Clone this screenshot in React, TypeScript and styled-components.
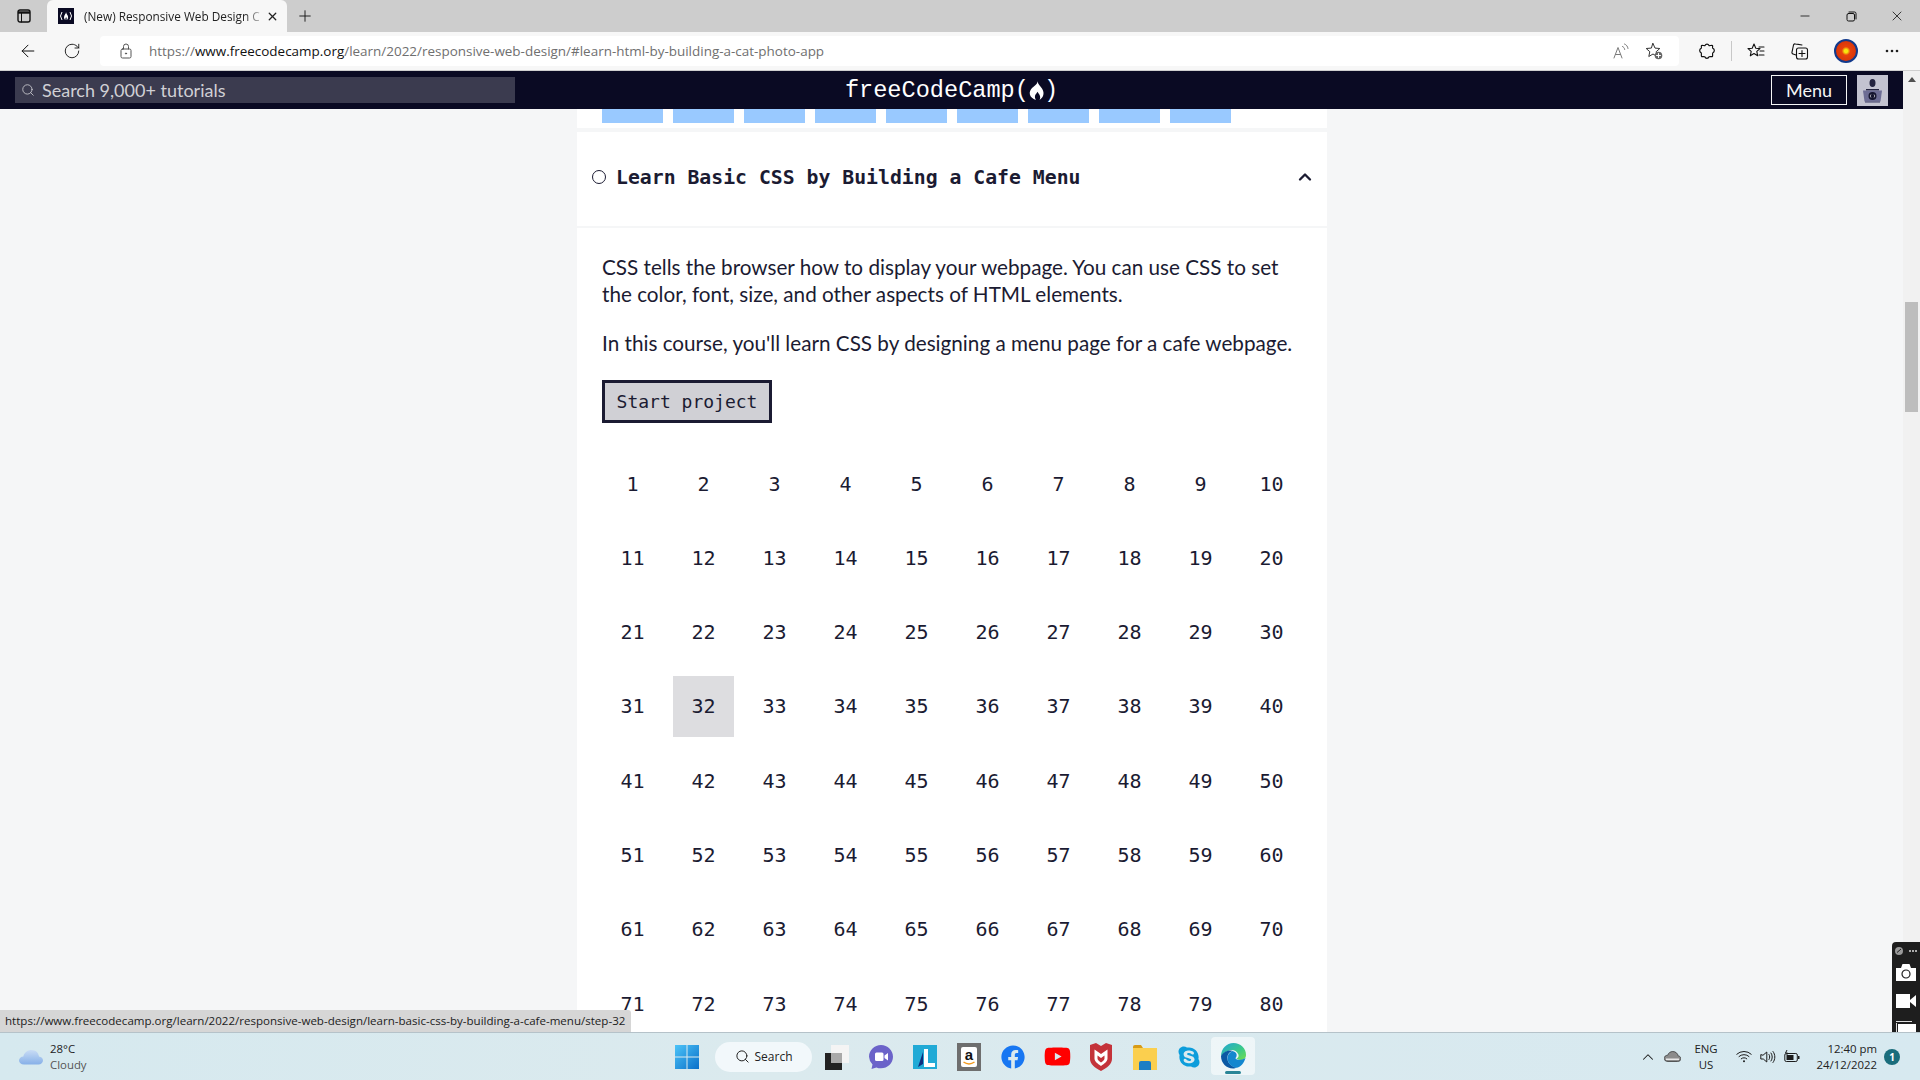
import React from 'react';
import styled, { createGlobalStyle } from 'styled-components';
import { ArrowLeft, RotateCw, Search, X, Plus, Minus, ChevronUp } from 'lucide-react';
import { FaFacebook, FaYoutube, FaSkype } from 'react-icons/fa';

const GlobalStyle = createGlobalStyle`
  html, body { margin: 0; padding: 0; background: #f5f6f7; }
  * { box-sizing: border-box; }
`;

const Shell = styled.div`
  width: 1920px;
  height: 1080px;
  overflow: hidden;
  display: flex;
  flex-direction: column;
  font-family: Lato, "Liberation Sans", sans-serif;
  color: #1b1b32;
`;

/* browser chrome */
const TabStrip = styled.div`
  height: 32px;
  background: #cdcdcd;
  display: flex;
  align-items: stretch;
  padding-left: 8px;
`;

const Slot = styled.div<{ $w?: number }>`
  width: ${p => p.$w ?? 44}px;
  flex: none;
  display: flex;
  align-items: center;
  justify-content: center;
  color: #111;
`;

const Tab = styled.div`
  width: 240px;
  margin-left: 7px;
  background: #f7f7f7;
  border-radius: 6px 6px 0 0;
  display: flex;
  align-items: center;
  padding: 0 8px 0 11px;
`;

const TabTitle = styled.div`
  flex: 1;
  margin-left: 10px;
  font: 11.8px "Open Sans", sans-serif;
  white-space: nowrap;
  color: #222;
  -webkit-mask-image: linear-gradient(90deg, #000 88%, transparent 100%);
  mask-image: linear-gradient(90deg, #000 88%, transparent 100%);
`;

const Spacer = styled.div`
  flex: 1;
`;

const Toolbar = styled.div`
  height: 39px;
  background: #f7f7f7;
  border-bottom: 1px solid #cfcfcf;
  padding: 4px 6px 4px 6px;
  display: flex;
  align-items: stretch;
`;

const AddressBar = styled.div`
  flex: 1;
  margin: 0 6px;
  background: #fff;
  border-radius: 4px;
  display: flex;
  align-items: center;
  padding: 0 9px 0 20px;
`;

const Url = styled.div`
  flex: 1;
  margin-left: 17px;
  font: 13.46px "Open Sans", sans-serif;
  color: #6f6f6f;
  white-space: nowrap;
  strong { font-weight: 400; color: #111; }
`;

const ToolbarDivider = styled.div`
  width: 1px;
  height: 20px;
  margin: 5px 2px 0;
  background: #c8c8c8;
`;

const ProfileDot = styled.div`
  width: 24px;
  height: 24px;
  border-radius: 50%;
  border: 2px solid #123a8c;
  background: radial-gradient(circle, #f6e40f 0 12%, #e8410c 30%, #d8360a 72%, #1d3f86 100%);
`;

const Body = styled.div`
  flex: 1;
  min-height: 0;
  display: flex;
  position: relative;
`;

const Main = styled.div`
  flex: 1;
  min-width: 0;
  display: flex;
  flex-direction: column;
`;

/* freeCodeCamp nav */
const Nav = styled.nav`
  height: 38px;
  flex: none;
  background: #0a0a23;
  display: grid;
  grid-template-columns: 1fr auto 1fr;
  align-items: center;
  padding: 0 15px;
`;

const SearchBox = styled.div`
  width: 500px;
  height: 26px;
  background: #3b3b4f;
  display: flex;
  align-items: center;
  padding-left: 6px;
  gap: 7px;
  color: #d0d0d5;
  font-size: 18px;
`;

const Logo = styled.div`
  display: flex;
  align-items: center;
  color: #fff;
  font: 23.6px "Liberation Mono", monospace;
`;

const NavRight = styled.div`
  display: flex;
  justify-content: flex-end;
  align-items: center;
  gap: 10px;
`;

const MenuButton = styled.div`
  width: 76px;
  height: 30px;
  border: 1px solid #f5f6f7;
  color: #f5f6f7;
  font-size: 18px;
  display: flex;
  align-items: center;
  justify-content: center;
`;

const Page = styled.div`
  flex: 1;
  min-height: 0;
  overflow: hidden;
  background: #f5f6f7;
  position: relative;
`;

const Column = styled.div`
  width: 750px;
  margin: 0 auto 0 577px;
`;

const PrevCard = styled.div`
  height: 19px;
  margin-bottom: 4px;
  background: #fff;
  padding-left: 25px;
  display: flex;
  gap: 10px;
`;

const PrevStep = styled.div`
  width: 61px;
  height: 14px;
  background: #99c9ff;
`;

const Card = styled.section`
  background: #fff;
`;

const CardHeader = styled.div`
  height: 96px;
  display: flex;
  align-items: center;
  padding: 0 12px 4px 15px;
  border-bottom: 2px solid #f5f6f7;
`;

const StatusCircle = styled.div`
  width: 14px;
  height: 14px;
  flex: none;
  border: 1.5px solid #1b1b32;
  border-radius: 50%;
  margin-right: 10px;
`;

const CardTitle = styled.h3`
  flex: 1;
  margin: 0;
  font: bold 19.8px "DejaVu Sans Mono", monospace;
  color: #1b1b32;
`;

const CardBody = styled.div`
  padding: 26px 25px 0;
`;

const Intro = styled.p`
  margin: 0 0 22px;
  font-size: 20.7px;
  line-height: 27px;
  color: #1b1b32;
`;

const StartButton = styled.button`
  display: block;
  width: 170px;
  height: 43px;
  margin: 23px 0 30px;
  padding: 0;
  background: #d0d0d5;
  border: 3px solid #1b1b32;
  color: #1b1b32;
  font: 18px "DejaVu Sans Mono", monospace;
`;

const StepGrid = styled.div`
  display: grid;
  grid-template-columns: repeat(10, 61px);
  grid-auto-rows: 61px;
  column-gap: 10px;
  row-gap: 13.3px;
`;

const Step = styled.div<{ $active?: boolean }>`
  display: flex;
  align-items: center;
  justify-content: center;
  font: 20px "DejaVu Sans Mono", monospace;
  color: #1b1b32;
  background: ${p => (p.$active ? '#dddde0' : 'transparent')};
`;

const StatusBubble = styled.div`
  position: absolute;
  left: 0;
  bottom: 0;
  width: 631px;
  height: 22px;
  background: #d6d6d6;
  border-top-right-radius: 3px;
  padding-left: 5px;
  font: 11.55px/22px "Open Sans", sans-serif;
  color: #1c1c1c;
  white-space: nowrap;
`;

const ScrollTrack = styled.div`
  width: 17px;
  flex: none;
  background: #f1f1f1;
  padding: 6px 2px 0;
  display: flex;
  flex-direction: column;
  align-items: center;
`;

const ArrowUp = styled.div`
  width: 0;
  height: 0;
  border-left: 4px solid transparent;
  border-right: 4px solid transparent;
  border-bottom: 5px solid #505050;
`;

const ScrollThumb = styled.div`
  width: 13px;
  height: 110px;
  margin-top: 220px;
  background: #bdbdbd;
`;

const CaptureWidget = styled.div`
  position: absolute;
  right: 0;
  bottom: 0;
  width: 28px;
  height: 90px;
  background: #1e1e1e;
  border-top-left-radius: 4px;
  overflow: hidden;
  display: flex;
  flex-direction: column;
  align-items: center;
  padding-top: 4px;
  gap: 13px;
  svg { flex: none; }
  svg:first-child { margin-bottom: -5px; }
`;

/* windows taskbar */
const Taskbar = styled.footer`
  height: 48px;
  flex: none;
  border-top: 1px solid #b5c2c9;
  background: linear-gradient(90deg, #d6e9ef 0%, #dbeaee 40%, #d7e9f0 100%);
  display: grid;
  grid-template-columns: 1fr auto 1fr;
  align-items: center;
`;

const Weather = styled.div`
  display: flex;
  align-items: center;
  padding-left: 19px;
  gap: 7px;
`;

const TwoLines = styled.div<{ $align?: string }>`
  font: 11.4px/16px "Open Sans", sans-serif;
  color: #222;
  text-align: ${p => p.$align ?? 'left'};
  white-space: nowrap;
  span { display: block; }
  span.dim { color: #555; }
`;

const Dock = styled.div`
  display: flex;
  align-items: center;
`;

const DockItem = styled.div<{ $active?: boolean }>`
  width: 44px;
  height: 38px;
  margin-top: ${p => (p.$active ? '-1px' : '0')};
  flex: none;
  position: relative;
  display: flex;
  align-items: center;
  justify-content: center;
  border-radius: 4px;
  background: ${p => (p.$active ? 'rgba(255,255,255,.55)' : 'transparent')};
`;

const ActiveBar = styled.div`
  position: absolute;
  bottom: 1px;
  left: 14px;
  width: 16px;
  height: 3px;
  border-radius: 2px;
  background: #2a8597;
`;

const DockSearch = styled.div`
  width: 97px;
  height: 30px;
  margin: 0 3px 0 6px;
  border-radius: 15px;
  background: #f2f8fb;
  display: flex;
  align-items: center;
  justify-content: center;
  gap: 5px;
  font: 12px "Open Sans", sans-serif;
  color: #222;
`;

const Tray = styled.div`
  display: flex;
  align-items: center;
  justify-content: flex-end;
  padding-right: 20px;
`;

const TrayIcon = styled.div<{ $w: number; $end?: boolean; $gap?: number }>`
  width: ${p => p.$w}px;
  margin-right: ${p => p.$gap ?? 0}px;
  flex: none;
  display: flex;
  align-items: center;
  justify-content: ${p => (p.$end ? 'flex-end' : 'center')};
  color: #1c1c1c;
`;

const NoticeBadge = styled.div`
  width: 16px;
  height: 16px;
  margin-left: 7px;
  border-radius: 50%;
  background: #1a6d7c;
  color: #fff;
  font: bold 10px/16px "Open Sans", sans-serif;
  text-align: center;
`;

const FlameMark = () => (
  <svg width="15" height="19" viewBox="0 0 16 20" fill="#fff">
    <path d="M9 0C9.500 3 12 5 14 8c1.500 2.500 2 5 1 7.500-.6 1.700-2 3.300-3.800 4.500.8-1.500 1-3 .3-4.800-.5-1.300-1.500-2.300-2.500-4-.7 1.500-2 2.500-2.500 4.200-.5 1.700 0 3.300.8 4.600C4 19 1.800 17 1 14.500.2 11.500 1.500 9 3.500 7c2-2 5.500-3.500 5.500-7z" />
  </svg>
);

const Favicon = () => (
  <svg width="16" height="16" viewBox="0 0 16 16">
    <rect width="16" height="16" fill="#0a0a23" />
    <path d="M4 4 2.500 8 4 12M12 4l1.500 4L12 12" stroke="#fff" fill="none" />
    <path d="M8 4c.3 1.500-2 3-2 5.300C6 10.700 7 12 7.500 12c-.6-1.200.3-2 .6-3 .5.800 1 2 .4 3 .9-.4 1.600-1.500 1.600-2.800C10.100 7.300 8.400 6 8 4z" fill="#fff" />
  </svg>
);

const line = { fill: 'none', stroke: 'currentColor', strokeWidth: 1.2, strokeLinecap: 'round' as const, strokeLinejoin: 'round' as const };

const SidebarIcon = () => (
  <svg width="14" height="14" viewBox="0 0 14 14" {...line} strokeWidth={1.4}>
    <rect x="1" y="1" width="12" height="12" rx="2" />
    <path d="M1 3.500h12" strokeWidth="2.400" strokeLinecap="butt" />
    <path d="M4.500 4v9" strokeWidth="1" />
  </svg>
);

const RestoreIcon = () => (
  <svg width="11" height="11" viewBox="0 0 11 11" {...line} strokeWidth={1}>
    <rect x="1" y="2.500" width="7.500" height="7.500" rx="1.500" />
    <path d="M3 1h5.500A1.500 1.500 0 0 1 10 2.500V8" />
  </svg>
);

const LockIcon = () => (
  <svg width="12" height="16" viewBox="0 0 12 16" {...line} stroke="#555" strokeWidth={1}>
    <rect x="1" y="6" width="10" height="9" rx="1.500" />
    <path d="M3.500 6V3.500a2.500 2.500 0 0 1 5 0V6" />
    <circle cx="6" cy="10.500" r=".6" fill="#555" />
  </svg>
);

const ReadAloudIcon = () => (
  <svg width="16" height="16" viewBox="0 0 16 16" {...line} stroke="#7a7a7a" strokeWidth={1}>
    <path d="M1 15 5 4.500 9 15M2.500 11.500h5" />
    <path d="M9.500 3.500c1.300.6 2 1.500 2.200 3M11.500 1c2 .9 3.200 2.300 3.500 4.500" />
  </svg>
);

const StarPlusIcon = () => (
  <svg width="18" height="18" viewBox="0 0 18 18" {...line} stroke="#333" strokeWidth={1}>
    <path d="M8 1.500l2 4.600 4.800.4-3.600 3.200 1 4.800L8 12l-4.200 2.500 1-4.800L1.200 6.500 6 6.100z" />
    <circle cx="13.500" cy="13.500" r="3.800" fill="#666" stroke="none" />
    <path d="M13.500 11.500v4M11.500 13.500h4" stroke="#fff" />
  </svg>
);

const PuzzleIcon = () => (
  <svg width="16" height="16" viewBox="0 0 16 16" {...line} strokeWidth={1.2}>
    <path d="M6 2.500a2.200 2.200 0 0 1 4 0c.3.700 2.800-.6 3.400 0 .7.700-.3 2.400.4 2.800a2.500 2.500 0 0 1 0 4.600c-.7.400.3 2.900-.4 3.600-.7.600-2.900-.3-3.400.3a2.200 2.200 0 0 1-4.200 0c-.4-.6-2.600.3-3.200-.3-.7-.7.200-3-.4-3.600a2.500 2.500 0 0 1 0-4.600c.6-.4-.3-2.100.4-2.800.6-.6 3.100.7 3.400 0z" />
  </svg>
);

const FavoritesIcon = () => (
  <svg width="18" height="16" viewBox="0 0 18 16" {...line} strokeWidth={1.1}>
    <path d="M7 1l1.800 4.200 4.200.4-3.200 2.800.9 4.400L7 10.500l-3.700 2.300.9-4.400L1 5.600l4.200-.4z" />
    <path d="M12 4h5M13 8h4M12 12h5" />
  </svg>
);

const CollectionsIcon = () => (
  <svg width="18" height="18" viewBox="0 0 18 18" {...line} strokeWidth={1.1}>
    <path d="M5 13 2 12a1.500 1.500 0 0 1-1-1.900L2.500 3a1.500 1.500 0 0 1 1.800-1.100L11 3" />
    <rect x="5.500" y="6" width="11" height="11" rx="2" />
    <path d="M11 8.500v6M8 11.500h6" />
  </svg>
);

const MoreIcon = () => (
  <svg width="14" height="4" viewBox="0 0 14 4" fill="#1f1f1f">
    <circle cx="2" cy="2" r="1.300" />
    <circle cx="7" cy="2" r="1.300" />
    <circle cx="12" cy="2" r="1.300" />
  </svg>
);

const AvatarImage = () => (
  <svg width="31" height="31" viewBox="0 0 31 31">
    <rect width="31" height="31" fill="#c3c3d0" />
    <ellipse cx="15.500" cy="8" rx="3" ry="4" fill="#23233f" />
    <path d="M9 14h13v1.500H9z" fill="#23233f" />
    <path d="M6 15.500h19l-1.500 11h-16z" fill="#6d6d94" />
    <circle cx="15.500" cy="21" r="4" fill="#15152e" />
    <path d="M14 19.500l-.8 1.500.8 1.500M17 19.500l.8 1.500-.8 1.500" stroke="#fff" strokeWidth=".6" fill="none" />
    <path d="M8 27h15" stroke="#3c3c66" />
  </svg>
);

const WeatherCloud = () => (
  <svg width="24" height="16" viewBox="0 0 24 16">
    <defs>
      <linearGradient id="cloudFill" x1="0" y1="0" x2="0" y2="1">
        <stop offset="0" stopColor="#c9dcf5" />
        <stop offset="1" stopColor="#86b0e8" />
      </linearGradient>
    </defs>
    <path d="M5 15.500C2 15.500 0 13.800 0 11.500s2-4 4.300-4C5.300 3.500 8.500 1 12.500 1c4.200 0 7 2.800 7.500 6.500 2.400.3 4 1.800 4 4s-2 4-4.500 4z" fill="url(#cloudFill)" />
  </svg>
);

const WindowsLogo = () => (
  <svg width="24" height="24" viewBox="0 0 24 24">
    <defs>
      <linearGradient id="winFill" x1="0" y1="0" x2="1" y2="1">
        <stop offset="0" stopColor="#4cc4f8" />
        <stop offset="1" stopColor="#0a6fc9" />
      </linearGradient>
    </defs>
    <path d="M0 0h11.500v11.500H0zM12.500 0H24v11.500H12.500zM0 12.500h11.500V24H0zM12.500 12.500H24V24H12.500z" fill="url(#winFill)" />
  </svg>
);

const TaskViewIcon = () => (
  <svg width="24" height="26" viewBox="0 0 24 26">
    <rect x="0" y="9" width="17" height="17" fill="#222" />
    <rect x="6" y="1" width="18" height="18" fill="#f4f4f4" />
    <rect x="6" y="9" width="11" height="10" fill="#a9a9a9" />
  </svg>
);

const TeamsIcon = () => (
  <svg width="24" height="24" viewBox="0 0 24 24">
    <path d="M12 0c6.600 0 12 5.200 12 11.700 0 6.400-5.400 11.600-12 11.600-1.600 0-3.200-.3-4.600-.9L2.500 24l1-4.600A11.500 11.500 0 0 1 0 11.700C0 5.200 5.400 0 12 0z" fill="#6b63c9" />
    <rect x="6" y="7.500" width="8.500" height="8.500" rx="1.500" fill="#fff" />
    <path d="M15.500 10.500 19 8v7.500l-3.500-2.500z" fill="#fff" />
  </svg>
);

const LearnIcon = () => (
  <svg width="24" height="24" viewBox="0 0 24 24">
    <rect width="24" height="24" fill="#21aad6" />
    <path d="M11 4h4v14h7v4H11z" fill="#fff" />
    <path d="M10 7v12L5 22z" fill="#0f2d7e" />
  </svg>
);

const AmazonIcon = () => (
  <svg width="24" height="28" viewBox="0 0 24 28">
    <rect width="24" height="28" fill="#6e6e6e" />
    <rect x="4" y="4" width="16" height="20" rx="2" fill="#fff" />
    <text x="12" y="17" textAnchor="middle" fontFamily="Liberation Sans, sans-serif" fontWeight="700" fontSize="15" fill="#111">a</text>
    <path d="M6.500 19c3.500 2.500 7.500 2.500 11 0" stroke="#f39a1f" strokeWidth="1.500" fill="none" />
  </svg>
);

const McAfeeIcon = () => (
  <svg width="22" height="28" viewBox="0 0 22 28">
    <path d="M0 2 6 0l5 3 5-3 6 2v14c0 5-5 9-11 12C5 25 0 21 0 16z" fill="#c4333a" />
    <path d="M4.500 6.500v9c0 3 3 5 6.500 7.500 3.500-2.500 6.500-4.500 6.500-7.500v-9L11 11z" fill="#fff" />
    <path d="M7.500 12.500v3c0 1.500 1.500 2.700 3.500 4 2-1.300 3.500-2.500 3.500-4v-3L11 15z" fill="#c4333a" />
  </svg>
);

const FolderIcon = () => (
  <svg width="24" height="26" viewBox="0 0 24 26">
    <path d="M0 3a2 2 0 0 1 2-2h6l2 3H0z" fill="#d89b16" />
    <path d="M0 4h24v22H0z" fill="#fbcf4e" />
    <path d="M6 19a2 2 0 0 1 2-2h8a2 2 0 0 1 2 2v7H6z" fill="#1c7ec4" />
  </svg>
);

const EdgeIcon = () => (
  <svg width="25" height="26" viewBox="0 0 25 26">
    <defs>
      <linearGradient id="edgeTop" x1="0" y1="0" x2="1" y2="1">
        <stop offset="0" stopColor="#22a5d8" />
        <stop offset=".6" stopColor="#3ccb86" />
        <stop offset="1" stopColor="#73dd4d" />
      </linearGradient>
    </defs>
    <path d="M12.500 0C19.500 0 25 5 25 12c0 3.500-2.500 5-5.500 5-2 0-3.700-.6-4-1.400 2-1 2.500-2.500 1.800-4.300C15.800 8 12.500 6.500 9 7.200 4.500 8 1.500 11 0 13 .3 5.500 5.500 0 12.500 0z" fill="url(#edgeTop)" />
    <path d="M0 13c1.500-3 5-5.500 9-5.500 1.500 0 2.500.3 3 .6C8 9 6 12 6.500 16c.5 4.500 4.500 8 9 8.500-1 .8-2 1-3.500 1C5.500 25.500 0 20 0 13z" fill="#0c59a4" />
    <path d="M6.500 16c-.3-3.500 1.500-6.500 5-8 1.800.3 3.500 1.500 4 3 .4 1.500 0 3-1 4-.5.800 1.500 1.800 4 1.800 2 0 4.500-.5 6-2-1 5-5 9.500-9 10-4.500-.6-8.500-4-9-8.800z" fill="#1487cf" />
  </svg>
);

const TrayCloud = () => (
  <svg width="17" height="11" viewBox="0 0 17 11">
    <path d="M4 10.500h9.500c2 0 3.500-1.200 3.500-2.800 0-1.500-1.200-2.600-2.800-2.800C13.700 2.400 11.500.5 8.800.5 6.300.5 4.400 2 3.700 4.200 1.600 4.300 0 5.700 0 7.400c0 1.800 1.800 3.100 4 3.100z" fill="#8c8c8c" stroke="#2a2a2a" strokeWidth=".7" />
    <path d="M2 7.500h13v1.500H2z" fill="#e9e9e9" />
  </svg>
);

const WifiIcon = () => (
  <svg width="16" height="13" viewBox="0 0 16 13" {...line} strokeWidth={1}>
    <path d="M.8 4.200a10.500 10.500 0 0 1 14.400 0M3 6.500a7.300 7.300 0 0 1 10 0M5.200 8.800a4 4 0 0 1 5.600 0" />
    <circle cx="8" cy="11.300" r="1" fill="currentColor" stroke="none" />
  </svg>
);

const VolumeIcon = () => (
  <svg width="16" height="14" viewBox="0 0 16 14" {...line} strokeWidth={1}>
    <path d="M.8 5v4h2.500L6.800 12V2L3.300 5z" />
    <path d="M9 4.500c1 1.500 1 3.500 0 5M11 3c1.700 2.400 1.700 5.600 0 8M13 1.500c2.500 3.300 2.500 7.700 0 11" />
  </svg>
);

const BatteryIcon = () => (
  <svg width="16" height="13" viewBox="0 0 16 13">
    <rect x=".8" y="3.500" width="12.500" height="8" rx="1.500" fill="none" stroke="#1c1c1c" />
    <rect x="2.500" y="5" width="7" height="5" fill="#1c1c1c" />
    <path d="M14 6h1.500v3H14z" fill="#1c1c1c" />
    <path d="M3 0 1.500 3h2L2.800 5" stroke="#1c1c1c" fill="none" />
  </svg>
);

const WidgetGlyph = () => (
  <svg width="24" height="10" viewBox="0 0 24 10">
    <circle cx="5" cy="5" r="4" fill="#999" />
    <path d="M3 6.500 7 3" stroke="#1e1e1e" />
    <circle cx="16" cy="5" r="1" fill="#ddd" />
    <circle cx="19" cy="5" r="1" fill="#ddd" />
    <circle cx="22" cy="5" r="1" fill="#ddd" />
  </svg>
);

const CameraGlyph = () => (
  <svg width="20" height="17" viewBox="0 0 20 17">
    <path d="M0 4h5l1.500-4h7L15 4h5v13H0z" fill="#fff" />
    <circle cx="10" cy="10" r="4" fill="none" stroke="#1e1e1e" strokeWidth="1.200" />
  </svg>
);

const VideoGlyph = () => (
  <svg width="20" height="14" viewBox="0 0 20 14" fill="#fff">
    <rect width="14" height="14" />
    <path d="M14 6 20 1v12l-6-5z" />
  </svg>
);

const PageGlyph = () => (
  <svg width="20" height="14" viewBox="0 0 20 14">
    <path d="M0 2h1v12H0zM0 1h16V0H0z" fill="#ddd" />
    <rect x="2" y="3" width="18" height="11" fill="#fff" />
  </svg>
);

const steps = Array.from({ length: 80 }, (_, i) => i + 1);

const App: React.FC = () => (
  <Shell>
    <GlobalStyle />
    <TabStrip>
      <Slot $w={32}><SidebarIcon /></Slot>
      <Tab>
        <Favicon />
        <TabTitle>(New) Responsive Web Design C</TabTitle>
        <X size={13} strokeWidth={2.4} color="#222" />
      </Tab>
      <Slot $w={36}><Plus size={18} strokeWidth={1.2} /></Slot>
      <Spacer />
      <Slot $w={46}><Minus size={14} strokeWidth={1.4} /></Slot>
      <Slot $w={46}><RestoreIcon /></Slot>
      <Slot $w={46}><X size={16} strokeWidth={1.2} /></Slot>
    </TabStrip>

    <Toolbar>
      <Slot><ArrowLeft size={20} strokeWidth={1.2} /></Slot>
      <Slot><RotateCw size={18} strokeWidth={1.2} /></Slot>
      <AddressBar>
        <LockIcon />
        <Url>https://<strong>www.freecodecamp.org</strong>/learn/2022/responsive-web-design/#learn-html-by-building-a-cat-photo-app</Url>
        <Slot $w={33}><ReadAloudIcon /></Slot>
        <Slot $w={33}><StarPlusIcon /></Slot>
      </AddressBar>
      <Slot><PuzzleIcon /></Slot>
      <ToolbarDivider />
      <Slot><FavoritesIcon /></Slot>
      <Slot><CollectionsIcon /></Slot>
      <Slot $w={48}><ProfileDot /></Slot>
      <Slot><MoreIcon /></Slot>
    </Toolbar>

    <Body>
      <Main>
        <Nav>
          <SearchBox>
            <Search size={14} strokeWidth={1.4} />
            Search 9,000+ tutorials
          </SearchBox>
          <Logo>freeCodeCamp(<FlameMark />)</Logo>
          <NavRight>
            <MenuButton>Menu</MenuButton>
            <AvatarImage />
          </NavRight>
        </Nav>
        <Page>
          <Column>
            <PrevCard>
              {Array.from({ length: 9 }, (_, i) => <PrevStep key={i} />)}
            </PrevCard>
            <Card>
              <CardHeader>
                <StatusCircle />
                <CardTitle>Learn Basic CSS by Building a Cafe Menu</CardTitle>
                <ChevronUp size={20} strokeWidth={2.8} color="#1b1b32" />
              </CardHeader>
              <CardBody>
                <Intro>CSS tells the browser how to display your webpage. You can use CSS to set the color, font, size, and other aspects of HTML elements.</Intro>
                <Intro>In this course, you'll learn CSS by designing a menu page for a cafe webpage.</Intro>
                <StartButton>Start project</StartButton>
                <StepGrid>
                  {steps.map(n => <Step key={n} $active={n === 32}>{n}</Step>)}
                </StepGrid>
              </CardBody>
            </Card>
          </Column>
          <StatusBubble>https://www.freecodecamp.org/learn/2022/responsive-web-design/learn-basic-css-by-building-a-cafe-menu/step-32</StatusBubble>
        </Page>
      </Main>
      <ScrollTrack>
        <ArrowUp />
        <ScrollThumb />
      </ScrollTrack>
      <CaptureWidget>
        <WidgetGlyph />
        <CameraGlyph />
        <VideoGlyph />
        <PageGlyph />
      </CaptureWidget>
    </Body>

    <Taskbar>
      <Weather>
        <WeatherCloud />
        <TwoLines>
          <span>28°C</span>
          <span className="dim">Cloudy</span>
        </TwoLines>
      </Weather>
      <Dock>
        <DockItem><WindowsLogo /></DockItem>
        <DockSearch><Search size={15} strokeWidth={1.6} />Search</DockSearch>
        <DockItem><TaskViewIcon /></DockItem>
        <DockItem><TeamsIcon /></DockItem>
        <DockItem><LearnIcon /></DockItem>
        <DockItem><AmazonIcon /></DockItem>
        <DockItem><FaFacebook size={24} color="#1877f2" /></DockItem>
        <DockItem><FaYoutube size={27} color="#f00" /></DockItem>
        <DockItem><McAfeeIcon /></DockItem>
        <DockItem><FolderIcon /></DockItem>
        <DockItem><FaSkype size={24} color="#0d9ddb" /></DockItem>
        <DockItem $active><EdgeIcon /><ActiveBar /></DockItem>
      </Dock>
      <Tray>
        <TrayIcon $w={24}><ChevronUp size={18} strokeWidth={1.4} /></TrayIcon>
        <TrayIcon $w={24}><TrayCloud /></TrayIcon>
        <TrayIcon $w={44} $gap={4}><TwoLines $align="center"><span>ENG</span><span>US</span></TwoLines></TrayIcon>
        <TrayIcon $w={24}><WifiIcon /></TrayIcon>
        <TrayIcon $w={24}><VolumeIcon /></TrayIcon>
        <TrayIcon $w={24}><BatteryIcon /></TrayIcon>
        <TrayIcon $w={73} $end><TwoLines $align="right"><span>12:40 pm</span><span>24/12/2022</span></TwoLines></TrayIcon>
        <NoticeBadge>1</NoticeBadge>
      </Tray>
    </Taskbar>
  </Shell>
);

export default App;
